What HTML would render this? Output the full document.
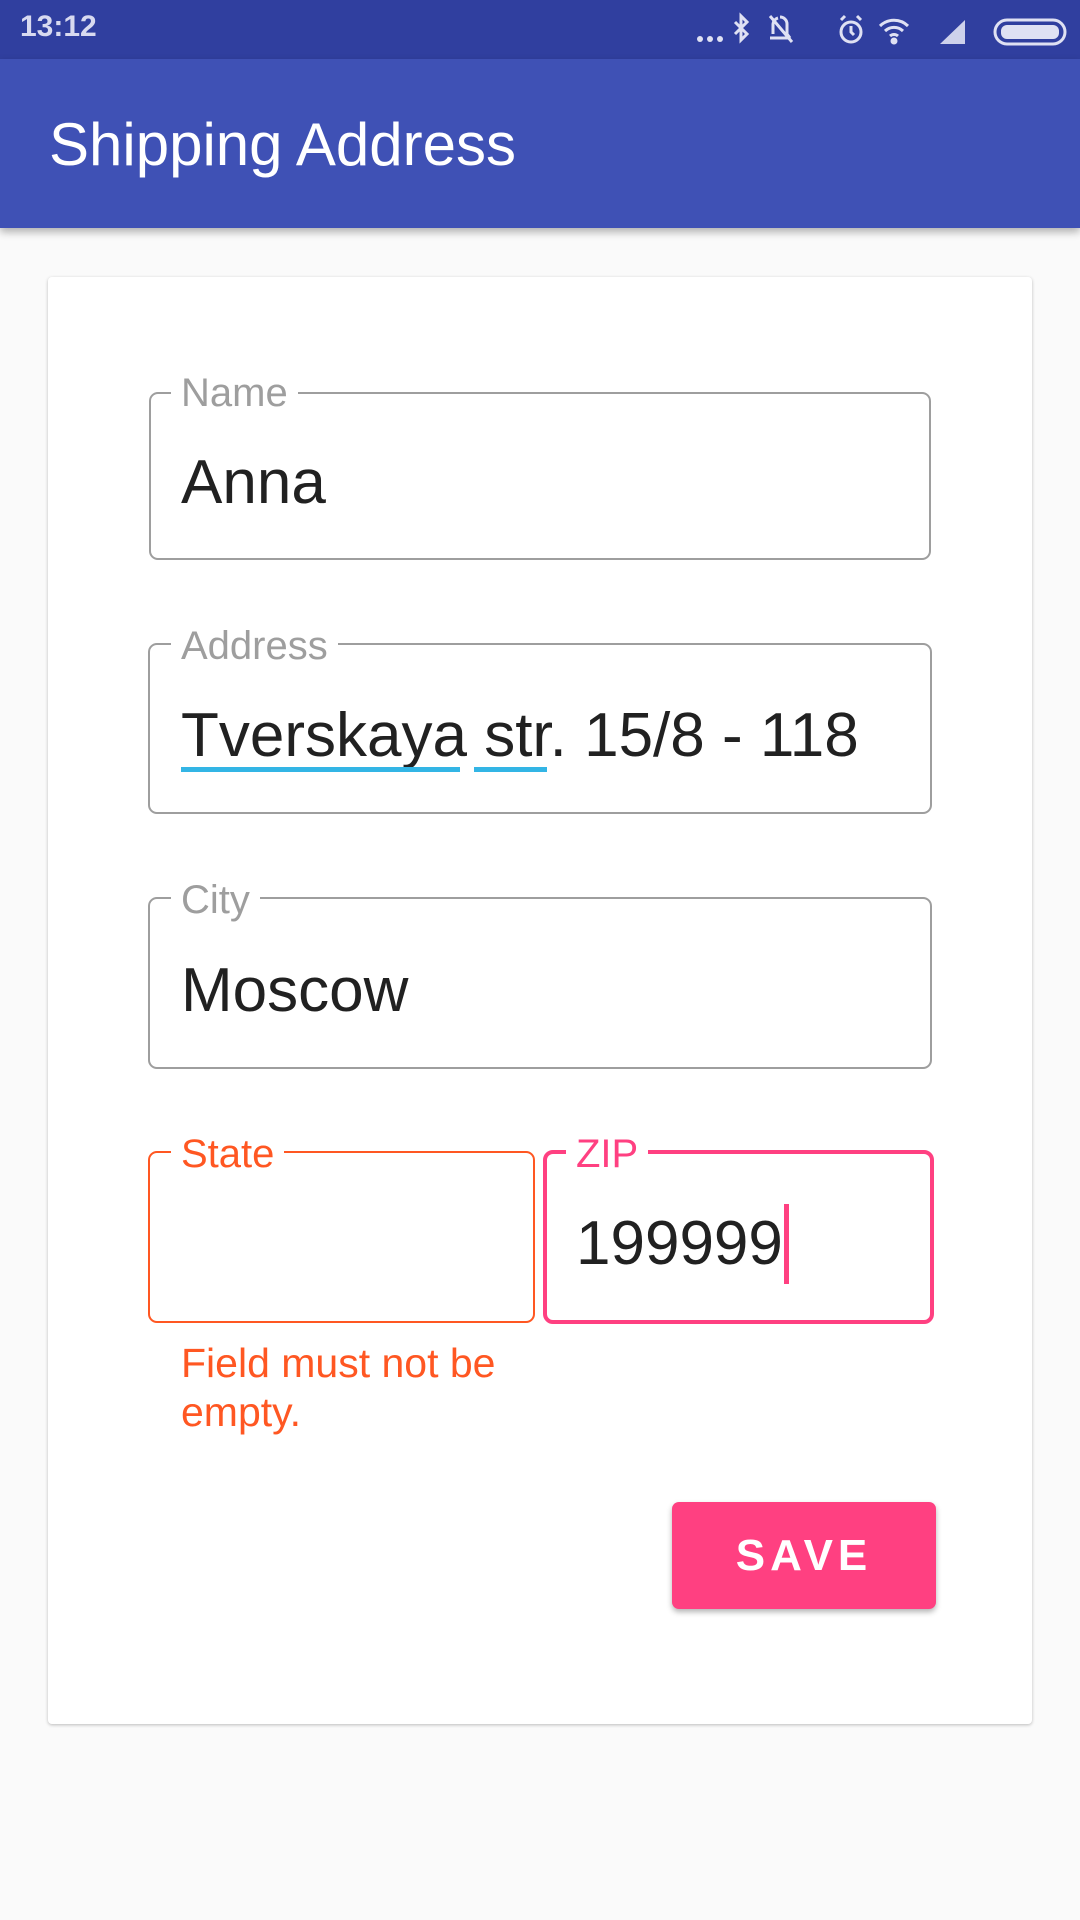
<!DOCTYPE html>
<html><head><meta charset="utf-8"><style>
*{margin:0;padding:0;box-sizing:border-box}
body{width:1080px;height:1920px;background:#fafafa;font-family:"Liberation Sans",sans-serif;position:relative;overflow:hidden}
.abs{position:absolute}
.sb{left:0;top:0;width:1080px;height:59px;background:#303f9f}
.ab{left:0;top:59px;width:1080px;height:169px;background:#3f51b5;box-shadow:0 4px 8px rgba(0,0,0,.3)}
.card{left:48px;top:277px;width:984px;height:1447px;background:#fff;box-shadow:0 1px 3px rgba(0,0,0,.25);border-radius:4px}
.f{border:2px solid #9e9e9e;border-radius:9px}
.lab{font-size:40px;color:#9e9e9e;background:#fff;padding:0 10px;line-height:40px}
.val{font-size:62px;color:#212121;white-space:nowrap}
</style></head><body>
<div class="abs sb"></div>
<div class="abs" style="left:20px;top:10px;font-size:30px;font-weight:bold;color:#d8daf0">13:12</div>
<svg class="abs" style="left:690px;top:12px" width="380" height="36" viewBox="0 0 380 36" fill="none" stroke="#dfe1f3" stroke-width="3">
<circle cx="10" cy="27" r="3" fill="#dfe1f3" stroke="none"/><circle cx="20" cy="27" r="3" fill="#dfe1f3" stroke="none"/><circle cx="30" cy="27" r="3" fill="#dfe1f3" stroke="none"/>
<path d="M45 10l12 12-6 6V4l6 6-12 12"/>
<path d="M80 26h20M90 5a7 7 0 0 1 7 7v10l3 4M83 22v-10a7 7 0 0 1 5-6M80 4l22 26"/>
<circle cx="161" cy="20" r="10"/><path d="M161 14v6l3 3M151 8l4-4M171 8l-4-4"/>
<path d="M190 14a20 20 0 0 1 28 0M195 19a13 13 0 0 1 18 0M200 24a6 6 0 0 1 8 0"/><circle cx="204" cy="29" r="2" fill="#dfe1f3"/>
<path d="M250 32L275 8v24z" fill="#dfe1f3" stroke="none" opacity=".9"/>
<rect x="305" y="8" width="70" height="24" rx="12" stroke-width="3"/><rect x="311" y="13" width="58" height="14" rx="6" fill="#dfe1f3" stroke="none"/>
</svg>
<div class="abs ab"></div>
<div class="abs" style="left:49px;top:110px;font-size:60px;color:#fff;line-height:70px">Shipping Address</div>
<div class="abs card"></div>

<div class="abs f" style="left:149px;top:392px;width:782px;height:168px"></div>
<div class="abs lab" style="left:171px;top:373px">Name</div>
<div class="abs val" style="left:181px;top:447px">Anna</div>

<div class="abs f" style="left:148px;top:643px;width:784px;height:171px"></div>
<div class="abs lab" style="left:171px;top:626px">Address</div>
<div class="abs val" style="left:181px;top:700px">Tverskaya str. 15/8 - 118</div>
<div class="abs" style="left:181px;top:767px;width:279px;height:5px;background:#33b5e5"></div>
<div class="abs" style="left:474px;top:767px;width:73px;height:5px;background:#33b5e5"></div>

<div class="abs f" style="left:148px;top:897px;width:784px;height:172px"></div>
<div class="abs lab" style="left:171px;top:880px">City</div>
<div class="abs val" style="left:181px;top:955px">Moscow</div>

<div class="abs f" style="left:148px;top:1151px;width:387px;height:172px;border-color:#ff5722"></div>
<div class="abs lab" style="left:171px;top:1134px;color:#ff5722">State</div>
<div class="abs f" style="left:543px;top:1150px;width:391px;height:174px;border:4px solid #ff4081;border-radius:10px"></div>
<div class="abs lab" style="left:566px;top:1134px;color:#ff4081">ZIP</div>
<div class="abs val" style="left:576px;top:1208px">199999</div>
<div class="abs" style="left:784px;top:1204px;width:5px;height:80px;background:#ff4081"></div>
<div class="abs" style="left:181px;top:1339px;font-size:41px;line-height:49px;color:#ff5722">Field must not be<br>empty.</div>

<div class="abs" style="left:672px;top:1502px;width:264px;height:107px;background:#ff4081;border-radius:7px;box-shadow:0 3px 6px rgba(0,0,0,.3);color:#fff;font-size:44px;font-weight:bold;letter-spacing:5px;text-align:center;line-height:107px">SAVE</div>
</body></html>
